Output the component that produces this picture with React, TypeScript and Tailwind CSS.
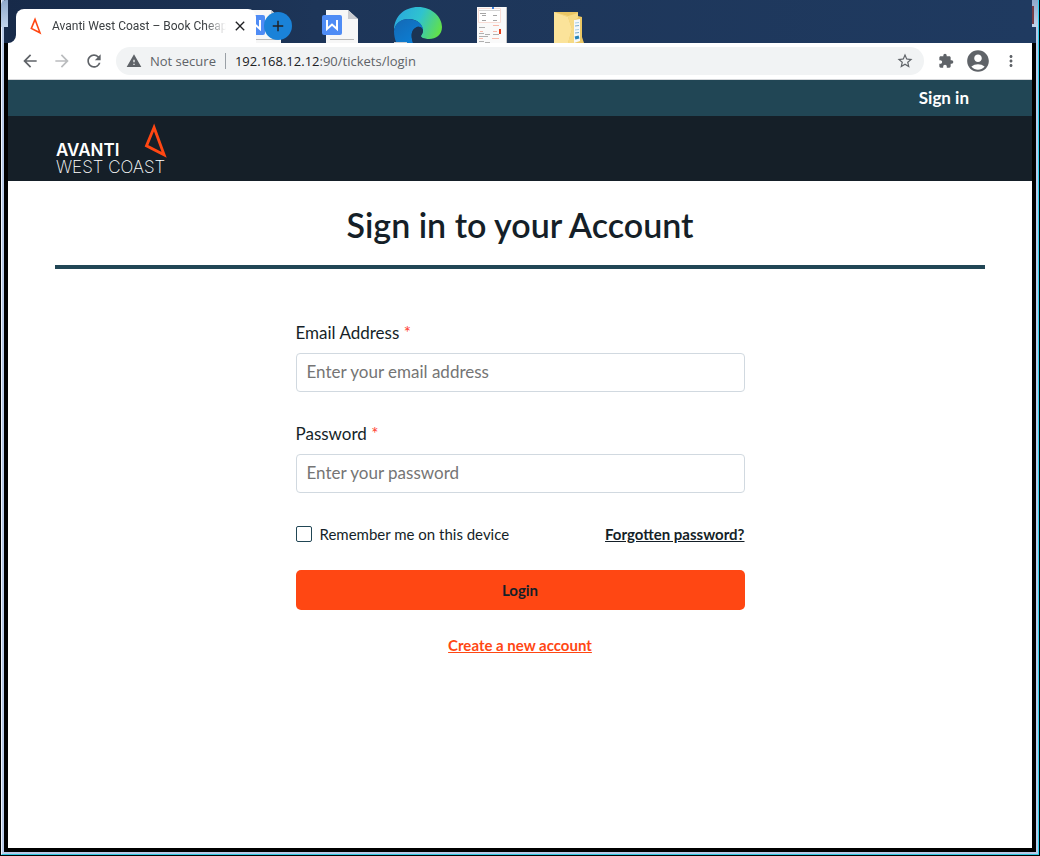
import { useState } from "react";
import {
  MdAccountCircle,
  MdAdd,
  MdArrowBack,
  MdArrowForward,
  MdClose,
  MdExtension,
  MdMoreVert,
  MdRefresh,
  MdStarBorder,
  MdWarning,
} from "react-icons/md";

function AvantiMark({ className, stroke }: { className: string; stroke: number }) {
  return (
    <svg viewBox="0 0 24 34" className={className} aria-hidden="true">
      <path d="M10.2 4.5 3.2 21.5 19.5 29.8Z" fill="none" stroke="#ff4713" strokeWidth={stroke} />
    </svg>
  );
}

function WriterDocument({ className }: { className: string }) {
  return (
    <svg viewBox="0 0 38 36" className={className} aria-hidden="true">
      <path d="M5 1h22l10 9v26H5Z" fill="#f7f7f7" />
      <path d="M27 1v9h10Z" fill="#c9cbd0" />
      <path d="M9 30.5h24" stroke="#b8b8b8" />
      <rect x="1" y="6" width="20" height="20" rx="2" fill="#4f8cf5" />
      <path d="M6 11v9l5-4.500 5 4.500v-9" fill="none" stroke="#fff" strokeWidth="2" />
    </svg>
  );
}

function EdgeLogo({ className }: { className: string }) {
  return (
    <svg viewBox="0 0 50 50" className={className} aria-hidden="true">
      <defs>
        <linearGradient id="edge-top" x1="0" y1="0.300" x2="1" y2="0.600">
          <stop offset="0" stopColor="#2aa9de" />
          <stop offset="0.500" stopColor="#2fc3cf" />
          <stop offset="1" stopColor="#62e04a" />
        </linearGradient>
        <linearGradient id="edge-left" x1="0" y1="0" x2="0.600" y2="1">
          <stop offset="0" stopColor="#1468b4" />
          <stop offset="1" stopColor="#0a84dc" />
        </linearGradient>
      </defs>
      <path d="M1 24C1 10 12 1 25 1c14 0 24 10 24 20 0 8-6 12-13 12-5 0-8-1-8-3 0-1 2-2 2-5 0-7-6-12-14-12C8 13 3 17 1 24Z" fill="url(#edge-top)" />
      <path d="M1 25c1-8 7-12 14-12 9 0 15 5 15 11-1-3-4-4-6-3-5 2-6 7-5 12 1 7 5 12 9 15C11 52 1 40 1 25Z" fill="url(#edge-left)" />
      <path d="M30 24c-1-3-4-4-6-3-5 2-6 7-5 12l1 4h18l-2-4c-5 0-8-1-8-3 0-1 2-3 2-6Z" fill="#1c3454" />
      <path d="M1 36h13v1H1Z" fill="#c8ccd2" />
    </svg>
  );
}

function PagePreview({ className }: { className: string }) {
  return (
    <svg viewBox="0 0 30 37" className={className} aria-hidden="true">
      <path d="M0 0h30v37H0Z" fill="#fafafa" />
      <path d="M1.500 1.500h22v14h-22Z" fill="#fff" stroke="#f8ddd6" />
      <path d="M2 3.500h21" stroke="#d5d5d5" />
      <path d="M3 6.500h6M5 8.500h4M16 8.500h4M5 13.500h4M16 13.500h4" stroke="#a5a5a5" />
      <path d="M2 20.500h6M2 26.500h5M8 27.500h5M16 27.500h6M2 29.500h9M2 34.500h5M8 35.500h5" stroke="#b0b0b0" />
      <path d="M16 18.500h6M3 24.500h3M16 24.500h4M2 31.500h4M15 31.500h7" stroke="#f7b9ab" />
      <path d="M22 22h2v5h-2Z" fill="#e5401c" />
      <path d="M15 0h2v2h-2Z" fill="#3f83df" />
      <path d="M29.5 0v37" stroke="#c4c4c4" />
    </svg>
  );
}

function FolderIcon({ className }: { className: string }) {
  return (
    <svg viewBox="0 0 32 33" className={className} aria-hidden="true">
      <path d="M1 2h24v4l4 1v20l2 6H1Z" fill="#eac664" />
      <path d="M1 2 15 7l4 12-4 14H1Z" fill="#fbe39a" />
      <path d="M1 2 15 6 25 3v5l-4 2v23h-6l4-14-4-12Z" fill="#f6da85" />
      <path d="m21 10 6-1v22l-6 2Z" fill="#f4f8fa" />
      <path d="m22 13 4-.5M22 20l4-.5" stroke="#a9cfe6" />
      <path d="m22 16 4-.5M22 23l4-.5" stroke="#77a9cc" />
      <path d="m22 28 4-1" stroke="#2683b8" strokeWidth="3" />
    </svg>
  );
}

function Desktop() {
  return (
    <div className="relative h-[43px] shrink-0 overflow-hidden bg-linear-to-r from-[#172a49] via-[#1d3558] via-30% to-[#1f3a60]">
      <WriterDocument className="absolute left-[236px] top-[9px] h-9 w-[38px]" />
      <WriterDocument className="absolute left-[313px] top-[9px] h-9 w-[38px]" />
      <EdgeLogo className="absolute left-[385px] top-1.5 h-[50px] w-[50px]" />
      <PagePreview className="absolute left-[469px] top-[7px] h-[37px] w-[30px]" />
      <FolderIcon className="absolute left-[545px] top-2.5 h-[33px] w-8" />
    </div>
  );
}

function BrowserTab() {
  return (
    <div className="absolute left-0 top-[9px] flex items-end">
      <svg viewBox="0 0 8 8" className="h-2 w-2" aria-hidden="true">
        <path d="M8 0v8H0a8 8 0 0 0 8-8Z" fill="#fff" />
      </svg>
      <div className="flex h-[34px] w-60 items-center rounded-t-lg bg-white pl-3">
        <AvantiMark className="mr-2 h-[18px] w-4" stroke={3} />
        <span className="w-[174px] whitespace-nowrap mask-r-from-88% font-['Roboto',sans-serif] text-[12px] text-[#3c4043]">
          Avanti West Coast – Book Cheap
        </span>
        <button type="button" aria-label="Close tab" className="ml-1.5 text-[#202124]">
          <MdClose className="h-4 w-4" />
        </button>
      </div>
      <button
        type="button"
        aria-label="New tab"
        className="mb-[3px] ml-2 flex h-7 w-7 items-center justify-center rounded-full bg-[#1a82d8] text-[#202124]"
      >
        <MdAdd className="h-[18px] w-[18px]" />
      </button>
    </div>
  );
}

function Toolbar() {
  return (
    <div className="flex h-[37px] shrink-0 items-center border-b border-[#d5d7da] bg-white px-3 text-[#5f6368]">
      <button type="button" aria-label="Back" className="mr-3">
        <MdArrowBack className="h-5 w-5" />
      </button>
      <button type="button" aria-label="Forward" className="mr-3 text-[#babcbe]">
        <MdArrowForward className="h-5 w-5" />
      </button>
      <button type="button" aria-label="Reload" className="mr-3">
        <MdRefresh className="h-5 w-5" />
      </button>
      <div className="flex h-7 min-w-0 flex-1 items-center rounded-full bg-[#f1f3f4] px-2.5 font-['Open_Sans',sans-serif] text-[13px]">
        <MdWarning className="mr-2 h-4 w-4 shrink-0" />
        <span className="whitespace-nowrap pt-px">Not secure</span>
        <span className="mx-[9px] h-4 w-px bg-[#9aa0a6]" />
        <span className="min-w-0 flex-1 truncate pt-px">
          <span className="text-[#202124]">192.168.12.12</span>:90/tickets/login
        </span>
        <button type="button" aria-label="Bookmark this tab">
          <MdStarBorder className="h-[18px] w-[18px]" />
        </button>
      </div>
      <button type="button" aria-label="Extensions" className="ml-3.5">
        <MdExtension className="h-4 w-4" />
      </button>
      <button type="button" aria-label="Profile" className="ml-[11px]">
        <MdAccountCircle className="h-[26px] w-[26px]" />
      </button>
      <button type="button" aria-label="Menu" className="ml-[11px]">
        <MdMoreVert className="h-[18px] w-[18px]" />
      </button>
    </div>
  );
}

function Field(props: { id: string; label: string; type: string; placeholder: string }) {
  return (
    <div className="mb-[30px]">
      <label htmlFor={props.id} className="mb-2 block text-[17px] leading-6">
        {props.label} <span className="text-[#ff4030]">*</span>
      </label>
      <input
        id={props.id}
        type={props.type}
        placeholder={props.placeholder}
        className="block h-[39px] w-full rounded-[4px] border border-[#d1d9e0] px-2.5 pb-0.5 text-[17px] placeholder:text-[#757575]"
      />
    </div>
  );
}

function SignInPage() {
  const [remember, setRemember] = useState(false);
  return (
    <div className="flex-1 font-['Lato',sans-serif] text-[#151f28]">
      <div className="flex h-9 items-center justify-end bg-[#214655] pr-[63px]">
        <a href="#sign-in" className="text-[17px] font-bold text-white">
          Sign in
        </a>
      </div>
      <header className="flex h-[65px] items-start bg-[#151f28] px-12">
        <a
          href="#home"
          aria-label="Avanti West Coast"
          className="relative block pt-[26px] font-['Inter',sans-serif] text-[17px] leading-[17px] text-white"
        >
          <span className="block font-semibold">AVANTI</span>
          <span className="block font-extralight">WEST COAST</span>
          <AvantiMark className="absolute -right-1 top-1.5 h-[38px] w-[26px]" stroke={2.6} />
        </a>
      </header>
      <main className="px-[47px]">
        <h1 className="border-b-4 border-[#214655] pb-5 pt-6 text-center text-[34px] font-semibold leading-10">
          Sign in to your Account
        </h1>
        <form className="mx-auto mt-[52px] max-w-[449px]" onSubmit={(e) => e.preventDefault()}>
          <Field id="email" label="Email Address" type="email" placeholder="Enter your email address" />
          <Field id="password" label="Password" type="password" placeholder="Enter your password" />
          <div className="flex items-center justify-between text-[15px] leading-[22px]">
            <label className="flex items-center gap-2">
              <input
                type="checkbox"
                checked={remember}
                onChange={(e) => setRemember(e.target.checked)}
                className="h-4 w-4 appearance-none rounded-[2px] border border-[#214655] checked:bg-[#214655]"
              />
              Remember me on this device
            </label>
            <a href="#forgotten" className="font-bold underline">
              Forgotten password?
            </a>
          </div>
          <button type="submit" className="mt-[25px] h-10 w-full rounded-[5px] bg-[#ff4713] text-[15px] font-bold">
            Login
          </button>
          <p className="mt-6 text-center text-[15px] leading-[22px]">
            <a href="#create" className="font-bold text-[#ff4713] underline">
              Create a new account
            </a>
          </p>
        </form>
      </main>
    </div>
  );
}

export default function App() {
  return (
    <div className="relative flex min-h-screen flex-col border-x border-b border-black">
      <div className="flex flex-1 flex-col border-x border-b border-b-[#2fc6e0] border-l-[#eef3fb] border-r-[#2fd0ee]">
        <div className="flex flex-1 flex-col border-x-2 border-b-2 border-[#b9cbe8]">
          <div className="relative flex flex-1 flex-col border-x-4 border-b-4 border-black bg-white">
            <Desktop />
            <BrowserTab />
            <Toolbar />
            <SignInPage />
          </div>
        </div>
      </div>
      <div className="absolute left-0 top-0 h-[27px] w-[7px] rounded-tl-[5px] bg-linear-to-b from-[#8fa9cb] to-[#c0d3eb]" />
      <div className="absolute left-[3px] top-[27px] h-4 w-1 bg-[#182b4a]" />
      <div className="absolute right-px top-0 h-[27px] w-1.5 bg-linear-to-b from-[#8fa9cb] to-[#c0d3eb]" />
      <div className="absolute right-[3px] top-[27px] h-4 w-1 bg-[#1f3a60]" />
      <div className="absolute right-[5px] top-1.5 h-[18px] w-0.5 bg-[#743d46]" />
    </div>
  );
}
